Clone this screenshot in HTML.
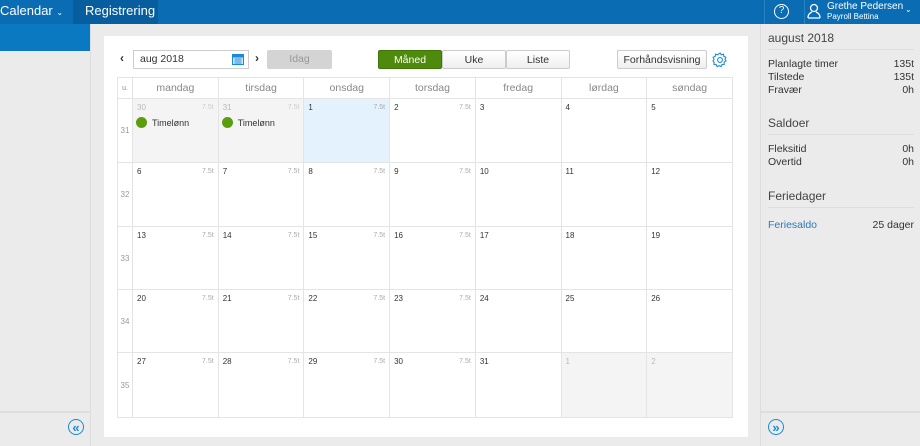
<!DOCTYPE html>
<html><head><meta charset="utf-8"><style>
*{box-sizing:border-box;margin:0;padding:0}
body{width:920px;height:446px;overflow:hidden;background:#ebebeb;font-family:"Liberation Sans",sans-serif;position:relative;font-size:10px;color:#333}
.top{position:absolute;left:0;top:0;width:920px;height:24px;background:#0a6db4}
.abs{position:absolute}
.card{position:absolute;left:104px;top:36px;width:644px;height:401px;background:#fff}
table{position:absolute;left:117px;top:77px;border-collapse:collapse;table-layout:fixed;width:616px}
td,th{border:1px solid #e4e4e4;vertical-align:top;position:relative}
th{height:21px;font-weight:normal;color:#888;font-size:10.5px;vertical-align:middle}
td .d{position:absolute;left:4px;top:4px;font-size:8px;color:#333}
td .h{position:absolute;right:4px;top:5px;font-size:7px;color:#aaa}
td.w{color:#999;font-size:8px;vertical-align:middle;text-align:center}
.g{background:#f4f4f4}.g .d{color:#bbb}.g .h{color:#ccc}
.b{background:#e3f2fd}
.ev{position:absolute;left:3px;top:18px;font-size:9px;color:#333;display:flex;align-items:center}
.ev i{display:inline-block;width:11px;height:11px;border-radius:50%;background:#5a9e10;margin-right:5px}
.btn{position:absolute;height:19px;border:1px solid #ccc;border-radius:2px;background:linear-gradient(#fff,#efefef);font-size:10.5px;display:flex;align-items:center;justify-content:center;color:#333}
.rp{position:absolute;left:760px;top:24px;width:160px;height:422px;background:#ebebeb;border-left:1px solid #ddd;font-size:10.5px;color:#333}
.row{position:absolute;left:7px;right:6px;display:flex;justify-content:space-between}
.hd{position:absolute;left:7px;right:6px;font-size:12px;color:#444;border-bottom:1px solid #ddd;padding-bottom:4px}
.cc{position:absolute;width:16px;height:16px;border:1.5px solid #1a8ad6;border-radius:50%;color:#1a8ad6;font-size:13px;font-weight:bold;display:flex;align-items:center;justify-content:center;line-height:1}
</style></head><body>
<div class="top"></div>
<div class="abs" style="left:0;top:3px;color:#fff;font-size:13px">Calendar <span style="font-size:8px">&#8964;</span></div>
<div class="abs" style="left:73px;top:0;width:85px;height:24px;background:#075e9e;color:#fff;font-size:13px;line-height:22px;padding-left:12px">Registrering</div>
<div class="abs" style="left:764px;top:0;width:1px;height:24px;background:#2a84c4"></div>
<div class="abs" style="left:774px;top:4px;width:15px;height:15px;border:1.5px solid #fff;border-radius:50%;color:#fff;font-size:10px;text-align:center;line-height:12px">?</div>
<div class="abs" style="left:804px;top:0;width:1px;height:24px;background:#2a84c4"></div>
<svg class="abs" style="left:807px;top:3px" width="14" height="16" viewBox="0 0 14 16"><circle cx="7" cy="5" r="3.5" fill="none" stroke="#fff" stroke-width="1.3"/><path d="M1 15c0-4 2-5 4-6M13 15c0-4-2-5-4-6M1 15h12" fill="none" stroke="#fff" stroke-width="1.3"/></svg>
<div class="abs" style="left:827px;top:1px;color:#fff;font-size:10px">Grethe Pedersen</div>
<div class="abs" style="left:827px;top:12px;color:#fff;font-size:8px">Payroll Bettina</div>
<div class="abs" style="left:905px;top:5px;color:#fff;font-size:8px">&#8964;</div>
<div class="abs" style="left:0;top:24px;width:91px;height:422px;background:#ebebeb;border-right:1px solid #ddd"></div>
<div class="abs" style="left:0;top:24px;width:90px;height:27px;background:#0a79c2"></div>
<div class="abs" style="left:0;top:411px;width:91px;height:2px;background:#ddd"></div>
<div class="cc" style="left:68px;top:419px">&#171;</div>
<div class="card"></div>
<div class="abs" style="left:120px;top:51px;font-size:12px;font-weight:bold">&#8249;</div>
<div class="abs" style="left:133px;top:50px;width:116px;height:19px;border:1px solid #ccc;font-size:10.5px;line-height:17px;padding-left:6px">aug 2018</div>
<svg class="abs" style="left:232px;top:53px" width="12" height="12" viewBox="0 0 12 12"><rect x="0.5" y="1.5" width="11" height="10" fill="#cfe6f8" stroke="#1a8ad6"/><rect x="0.5" y="1.5" width="11" height="3" fill="#1a8ad6"/><path d="M2 6h8M2 8h8M2 10h8M4 5v6M6 5v6M8 5v6" stroke="#1a8ad6" stroke-width=".6"/></svg>
<div class="abs" style="left:255px;top:51px;font-size:12px;font-weight:bold">&#8250;</div>
<div class="abs" style="left:267px;top:50px;width:65px;height:19px;background:#d4d4d4;border-radius:2px;color:#999;text-align:center;line-height:19px;font-size:10.5px">Idag</div>
<div class="btn" style="left:378px;top:50px;width:64px;background:#4e8a0c;border-color:#3f7608;color:#fff">Måned</div>
<div class="btn" style="left:442px;top:50px;width:64px">Uke</div>
<div class="btn" style="left:506px;top:50px;width:64px">Liste</div>
<div class="btn" style="left:617px;top:50px;width:90px">Forhåndsvisning</div>
<svg class="abs" style="left:712px;top:52px" width="16" height="16" viewBox="0 0 16 16"><path d="M8 1l1.3 1.8 2.2-.6.3 2.2 2.1.9-.9 2.1 1 1.6-1.9 1.2.1 2.2-2.2.2-.9 2-2-1-2 1-.9-2-2.2-.2.1-2.2L1 9l1-1.6-.9-2.1 2.1-.9.3-2.2 2.2.6z" fill="none" stroke="#1a8ad6" stroke-width="1.1"/><circle cx="8" cy="8" r="2.4" fill="none" stroke="#1a8ad6" stroke-width="1.1"/></svg>
<table>
<colgroup><col style="width:15px"><col><col><col><col><col><col><col></colgroup>
<tr><th style="font-size:7px">u.</th><th>mandag</th><th>tirsdag</th><th>onsdag</th><th>torsdag</th><th>fredag</th><th>lørdag</th><th>søndag</th></tr>
<tr style="height:64px"><td class="w">31</td><td class="g"><span class="d">30</span><span class="h">7.5t</span><div class="ev"><i></i>Timelønn</div></td><td class="g"><span class="d">31</span><span class="h">7.5t</span><div class="ev"><i></i>Timelønn</div></td><td class="b"><span class="d">1</span><span class="h">7.5t</span></td><td><span class="d">2</span><span class="h">7.5t</span></td><td><span class="d">3</span></td><td><span class="d">4</span></td><td><span class="d">5</span></td></tr>
<tr style="height:64px"><td class="w">32</td><td><span class="d">6</span><span class="h">7.5t</span></td><td><span class="d">7</span><span class="h">7.5t</span></td><td><span class="d">8</span><span class="h">7.5t</span></td><td><span class="d">9</span><span class="h">7.5t</span></td><td><span class="d">10</span></td><td><span class="d">11</span></td><td><span class="d">12</span></td></tr>
<tr style="height:63px"><td class="w">33</td><td><span class="d">13</span><span class="h">7.5t</span></td><td><span class="d">14</span><span class="h">7.5t</span></td><td><span class="d">15</span><span class="h">7.5t</span></td><td><span class="d">16</span><span class="h">7.5t</span></td><td><span class="d">17</span></td><td><span class="d">18</span></td><td><span class="d">19</span></td></tr>
<tr style="height:63px"><td class="w">34</td><td><span class="d">20</span><span class="h">7.5t</span></td><td><span class="d">21</span><span class="h">7.5t</span></td><td><span class="d">22</span><span class="h">7.5t</span></td><td><span class="d">23</span><span class="h">7.5t</span></td><td><span class="d">24</span></td><td><span class="d">25</span></td><td><span class="d">26</span></td></tr>
<tr style="height:65px"><td class="w">35</td><td><span class="d">27</span><span class="h">7.5t</span></td><td><span class="d">28</span><span class="h">7.5t</span></td><td><span class="d">29</span><span class="h">7.5t</span></td><td><span class="d">30</span><span class="h">7.5t</span></td><td><span class="d">31</span></td><td class="g"><span class="d">1</span></td><td class="g"><span class="d">2</span></td></tr>
</table>
<div class="rp">
<div class="hd" style="top:7px">august 2018</div>
<div class="row" style="top:34px"><span>Planlagte timer</span><span>135t</span></div>
<div class="row" style="top:47px"><span>Tilstede</span><span>135t</span></div>
<div class="row" style="top:60px"><span>Fravær</span><span>0h</span></div>
<div class="hd" style="top:92px">Saldoer</div>
<div class="row" style="top:119px"><span>Fleksitid</span><span>0h</span></div>
<div class="row" style="top:132px"><span>Overtid</span><span>0h</span></div>
<div class="hd" style="top:165px">Feriedager</div>
<div class="row" style="top:195px"><span style="color:#2a7ab8">Feriesaldo</span><span>25 dager</span></div>
<div class="abs" style="left:0;top:387px;width:160px;height:2px;background:#ddd"></div>
<div class="cc" style="left:7px;top:395px">&#187;</div>
</div>
</body></html>
